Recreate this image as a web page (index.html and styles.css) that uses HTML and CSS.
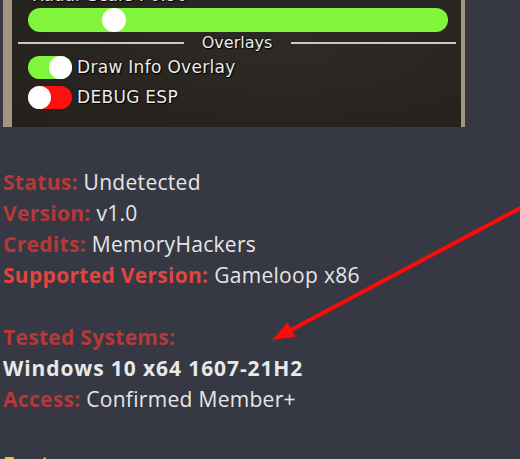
FILE: index.html
```html
<!DOCTYPE html>
<html>
<head>
<meta charset="utf-8">
<link rel="stylesheet" href="styles.css">
</head>
<body>
<div class="page">
  <div class="shot">
    <div class="shot-inner">
      <div class="shot-label">Radar Scale : 0.90</div>
      <div class="slider"><span class="slider-knob"></span></div>
      <div class="sep"><span class="sep-line"></span><span class="sep-text">Overlays</span><span class="sep-line"></span></div>
      <div class="toggle-row"><span class="toggle on"><span class="toggle-knob"></span></span><span class="toggle-label">Draw Info Overlay</span></div>
      <div class="toggle-row"><span class="toggle off"><span class="toggle-knob"></span></span><span class="toggle-label">DEBUG ESP</span></div>
    </div>
  </div>
  <div class="info">
    <p class="line"><b class="key">Status:</b> Undetected</p>
    <p class="line"><b class="key">Version:</b> v1.0</p>
    <p class="line"><b class="key">Credits:</b> MemoryHackers</p>
    <p class="line"><b class="key bright">Supported Version:</b> Gameloop x86</p>
    <p class="line blank"></p>
    <p class="line"><b class="key">Tested Systems:</b></p>
    <p class="line"><b class="strong">Windows 10 x64 1607-21H2</b></p>
    <p class="line"><b class="key">Access:</b> Confirmed Member+</p>
    <p class="line blank"></p>
    <p class="line features"><b class="yellow">Features:</b></p>
  </div>
  <svg class="arrow" width="520" height="459" viewBox="0 0 520 459">
    <line x1="524" y1="206" x2="289" y2="331" stroke="#ff0a0a" stroke-width="4"/>
    <polygon points="272,340 287.6,322.6 295.2,336.8" fill="#ff0a0a"/>
  </svg>
</div>
</body>
</html>
```

FILE: styles.css
```css
html, body {
  margin: 0;
  padding: 0;
  background: #363943;
}
.page {
  position: relative;
  width: 520px;
  height: 459px;
  overflow: hidden;
}
.shot {
  box-sizing: border-box;
  width: 462px;
  height: 127px;
  margin-left: 3px;
  background: radial-gradient(ellipse at 60% 40%, #2e2b26 0%, #27241f 70%, #24211c 100%);
  border-left: 9px solid #a39680;
  border-right: 4px solid #a39680;
  overflow: hidden;
  font-family: "DejaVu Sans", Verdana, sans-serif;
  color: #ececec;
  text-shadow: 0 0 2px #000, 1px 1px 1px #000;
}
.shot-inner {
  display: flex;
  flex-direction: column;
  margin-top: -13px;
}
.shot-label {
  height: 21px;
  line-height: 16px;
  font-size: 17px;
  padding-left: 20px;
}
.slider {
  position: relative;
  box-sizing: border-box;
  margin-left: 16px;
  width: 420px;
  height: 24px;
  border-radius: 12px;
  background: #80f53c;
}
.slider-knob {
  position: absolute;
  left: 74px;
  top: 0;
  width: 24px;
  height: 24px;
  border-radius: 50%;
  background: #fff;
}
.sep {
  display: flex;
  align-items: center;
  height: 22px;
  padding: 0 5px 0 6px;
}
.sep-line {
  flex: 1;
  height: 2px;
  background: #c9c9c9;
}
.sep-text {
  width: 107px;
  text-align: center;
  font-size: 16px;
  line-height: 22px;
}
.toggle-row {
  display: flex;
  align-items: flex-start;
  height: 30px;
  padding-top: 2px;
  box-sizing: border-box;
  padding-left: 16px;
  gap: 5px;
}
.toggle {
  position: relative;
  display: block;
  width: 44px;
  height: 23px;
  border-radius: 12px;
}
.toggle.on { background: #80f53c; }
.toggle.off { background: #ff1010; }
.toggle-knob {
  position: absolute;
  top: 0;
  width: 23px;
  height: 23px;
  border-radius: 50%;
  background: #fff;
}
.toggle.on .toggle-knob { right: 0; }
.toggle.off .toggle-knob { left: 0; }
.toggle-label {
  font-size: 17px;
  line-height: 23px;
  letter-spacing: 0.3px;
}
.info {
  padding: 40px 0 0 3px;
  font-family: "Open Sans", "Noto Sans", sans-serif;
  font-size: 21px;
  letter-spacing: 0.3px;
  color: #e6e6e6;
}
.line {
  margin: 0;
  height: 31px;
  line-height: 31px;
  white-space: nowrap;
}
.key {
  color: #b73838;
  font-weight: 700;
}
.key.bright {
  color: #df463d;
}
.strong {
  color: #e8e8e8;
  font-weight: 700;
  letter-spacing: 0.9px;
}
.features {
  padding-top: 3px;
}
.yellow {
  color: #f7c421;
  font-weight: 700;
}
.arrow {
  position: absolute;
  left: 0;
  top: 0;
  pointer-events: none;
}
```
